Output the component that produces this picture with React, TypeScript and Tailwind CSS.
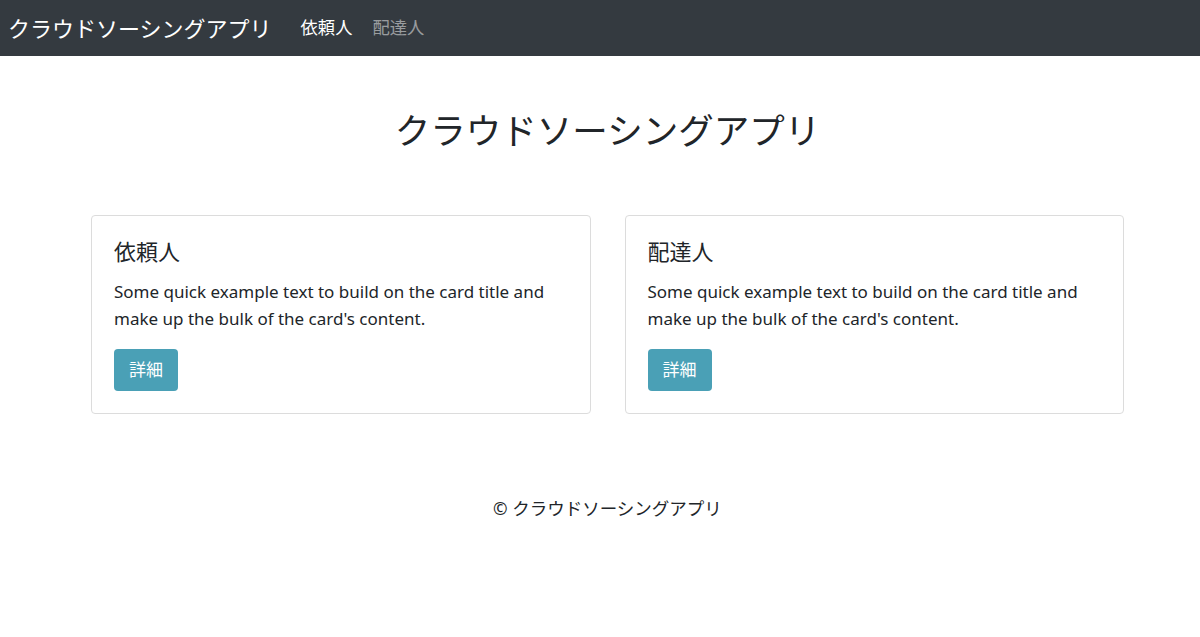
const FONT = "font-['Noto_Sans','Noto_Sans_CJK_JP',sans-serif]";

const CARDS = [
  { title: '依頼人', body: "Some quick example text to build on the card title and make up the bulk of the card's content." },
  { title: '配達人', body: "Some quick example text to build on the card title and make up the bulk of the card's content." },
];

export default function App() {
  return (
    <div className={`${FONT} min-h-[637px] bg-white text-[#212529]`}>
      <nav className="flex h-[56px] items-center bg-[#343a40] px-2">
        <span className="text-[22px] leading-none text-white">クラウドソーシングアプリ</span>
        <div className="ml-[29px] flex items-center gap-[20px] text-[17.3px]">
          <span className="text-white">依頼人</span>
          <span className="text-white/50">配達人</span>
        </div>
      </nav>

      <main className="ml-[91px] w-[1033px]">
        <h1 className="mt-[53px] text-center text-[35.5px] leading-[1.2] font-normal">クラウドソーシングアプリ</h1>

        <div className="mt-[63px] grid grid-cols-2 gap-[34px]">
          {CARDS.map((c) => (
            <div key={c.title} className="h-[199px] rounded-[4px] border border-[#dcdcdc] px-[22px] pt-[22px]">
              <h5 className="text-[22px] leading-[1.2]">{c.title}</h5>
              <p className="mt-[14px] w-[450px] text-[17px] leading-[27px]">{c.body}</p>
              <button className="mt-[17px] h-[42px] rounded-[4px] bg-[#4aa0b6] px-[15px] text-[17px] text-white">
                詳細
              </button>
            </div>
          ))}
        </div>

        <footer className="mt-[82px] text-center text-[17.5px] leading-[24px]">© クラウドソーシングアプリ</footer>
      </main>
    </div>
  );
}
